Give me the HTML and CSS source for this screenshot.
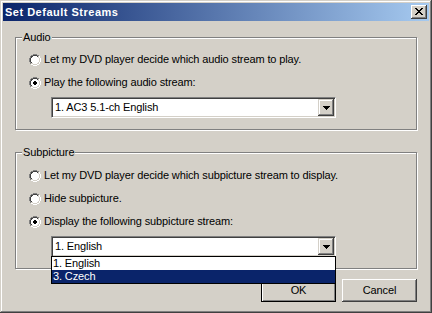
FILE: index.html
```html
<!DOCTYPE html>
<html>
<head>
<meta charset="utf-8">
<title>Set Default Streams</title>
<link rel="stylesheet" href="styles.css">
</head>
<body>
<div class="window">
  <div class="titlebar">
    <span class="title">Set Default Streams</span>
    <div class="close-btn">
      <svg width="8" height="7" viewBox="0 0 8 7" shape-rendering="crispEdges"><path fill="#000" d="M0 0h2v1h-2zM6 0h2v1h-2zM1 1h2v1h-2zM5 1h2v1h-2zM2 2h4v1h-4zM3 3h2v1h-2zM2 4h4v1h-4zM1 5h2v1h-2zM5 5h2v1h-2zM0 6h2v1h-2zM6 6h2v1h-2z"/></svg>
    </div>
  </div>
  <div class="client">
    <div class="group group-audio">
      <div class="group-title">Audio</div>
      <div class="radio-row">
        <svg class="radio" width="12" height="12" viewBox="0 0 12 12" shape-rendering="crispEdges"><path fill="#808080" d="M4 0h4v1h-4zM2 1h2v1h-2zM8 1h2v1h-2zM1 2h1v2h-1zM0 4h1v4h-1zM1 8h1v2h-1z"/><path fill="#fff" d="M10 2h1v2h-1zM11 4h1v4h-1zM10 8h1v2h-1zM2 10h2v1h-2zM8 10h2v1h-2zM4 11h4v1h-4zM4 2h4v1h-4zM3 3h6v1h-6zM2 4h8v4h-8zM3 8h6v1h-6zM4 9h4v1h-4z"/><path fill="#404040" d="M4 1h4v1h-4zM2 2h2v1h-2zM8 2h1v1h-1zM2 3h1v1h-1zM1 4h1v4h-1zM2 8h1v1h-1z"/><path fill="#d4d0c8" d="M9 2h1v2h-1zM10 4h1v4h-1zM9 8h1v1h-1zM2 9h2v1h-2zM8 9h2v1h-2zM4 10h4v1h-4z"/></svg>
        <span>Let my DVD player decide which audio stream to play.</span>
      </div>
      <div class="radio-row">
        <svg class="radio" width="12" height="12" viewBox="0 0 12 12" shape-rendering="crispEdges"><path fill="#808080" d="M4 0h4v1h-4zM2 1h2v1h-2zM8 1h2v1h-2zM1 2h1v2h-1zM0 4h1v4h-1zM1 8h1v2h-1z"/><path fill="#fff" d="M10 2h1v2h-1zM11 4h1v4h-1zM10 8h1v2h-1zM2 10h2v1h-2zM8 10h2v1h-2zM4 11h4v1h-4zM4 2h4v1h-4zM3 3h6v1h-6zM2 4h8v4h-8zM3 8h6v1h-6zM4 9h4v1h-4z"/><path fill="#404040" d="M4 1h4v1h-4zM2 2h2v1h-2zM8 2h1v1h-1zM2 3h1v1h-1zM1 4h1v4h-1zM2 8h1v1h-1z"/><path fill="#d4d0c8" d="M9 2h1v2h-1zM10 4h1v4h-1zM9 8h1v1h-1zM2 9h2v1h-2zM8 9h2v1h-2zM4 10h4v1h-4z"/><path fill="#000" d="M5 4h2v1h-2zM4 5h4v2h-4zM5 7h2v1h-2z"/></svg>
        <span>Play the following audio stream:</span>
      </div>
      <div class="combo">
        <div class="combo-text">1. AC3 5.1-ch English</div>
        <div class="combo-btn">
          <svg width="7" height="4" viewBox="0 0 7 4" shape-rendering="crispEdges"><path fill="#000" d="M0 0h7v1h-7zM1 1h5v1h-5zM2 2h3v1h-3zM3 3h1v1h-1z"/></svg>
        </div>
      </div>
    </div>

    <div class="group group-sub">
      <div class="group-title">Subpicture</div>
      <div class="radio-row">
        <svg class="radio" width="12" height="12" viewBox="0 0 12 12" shape-rendering="crispEdges"><path fill="#808080" d="M4 0h4v1h-4zM2 1h2v1h-2zM8 1h2v1h-2zM1 2h1v2h-1zM0 4h1v4h-1zM1 8h1v2h-1z"/><path fill="#fff" d="M10 2h1v2h-1zM11 4h1v4h-1zM10 8h1v2h-1zM2 10h2v1h-2zM8 10h2v1h-2zM4 11h4v1h-4zM4 2h4v1h-4zM3 3h6v1h-6zM2 4h8v4h-8zM3 8h6v1h-6zM4 9h4v1h-4z"/><path fill="#404040" d="M4 1h4v1h-4zM2 2h2v1h-2zM8 2h1v1h-1zM2 3h1v1h-1zM1 4h1v4h-1zM2 8h1v1h-1z"/><path fill="#d4d0c8" d="M9 2h1v2h-1zM10 4h1v4h-1zM9 8h1v1h-1zM2 9h2v1h-2zM8 9h2v1h-2zM4 10h4v1h-4z"/></svg>
        <span>Let my DVD player decide which subpicture stream to display.</span>
      </div>
      <div class="radio-row">
        <svg class="radio" width="12" height="12" viewBox="0 0 12 12" shape-rendering="crispEdges"><path fill="#808080" d="M4 0h4v1h-4zM2 1h2v1h-2zM8 1h2v1h-2zM1 2h1v2h-1zM0 4h1v4h-1zM1 8h1v2h-1z"/><path fill="#fff" d="M10 2h1v2h-1zM11 4h1v4h-1zM10 8h1v2h-1zM2 10h2v1h-2zM8 10h2v1h-2zM4 11h4v1h-4zM4 2h4v1h-4zM3 3h6v1h-6zM2 4h8v4h-8zM3 8h6v1h-6zM4 9h4v1h-4z"/><path fill="#404040" d="M4 1h4v1h-4zM2 2h2v1h-2zM8 2h1v1h-1zM2 3h1v1h-1zM1 4h1v4h-1zM2 8h1v1h-1z"/><path fill="#d4d0c8" d="M9 2h1v2h-1zM10 4h1v4h-1zM9 8h1v1h-1zM2 9h2v1h-2zM8 9h2v1h-2zM4 10h4v1h-4z"/></svg>
        <span>Hide subpicture.</span>
      </div>
      <div class="radio-row">
        <svg class="radio" width="12" height="12" viewBox="0 0 12 12" shape-rendering="crispEdges"><path fill="#808080" d="M4 0h4v1h-4zM2 1h2v1h-2zM8 1h2v1h-2zM1 2h1v2h-1zM0 4h1v4h-1zM1 8h1v2h-1z"/><path fill="#fff" d="M10 2h1v2h-1zM11 4h1v4h-1zM10 8h1v2h-1zM2 10h2v1h-2zM8 10h2v1h-2zM4 11h4v1h-4zM4 2h4v1h-4zM3 3h6v1h-6zM2 4h8v4h-8zM3 8h6v1h-6zM4 9h4v1h-4z"/><path fill="#404040" d="M4 1h4v1h-4zM2 2h2v1h-2zM8 2h1v1h-1zM2 3h1v1h-1zM1 4h1v4h-1zM2 8h1v1h-1z"/><path fill="#d4d0c8" d="M9 2h1v2h-1zM10 4h1v4h-1zM9 8h1v1h-1zM2 9h2v1h-2zM8 9h2v1h-2zM4 10h4v1h-4z"/><path fill="#000" d="M5 4h2v1h-2zM4 5h4v2h-4zM5 7h2v1h-2z"/></svg>
        <span>Display the following subpicture stream:</span>
      </div>
      <div class="combo-wrap">
        <div class="combo">
          <div class="combo-text">1. English</div>
          <div class="combo-btn">
            <svg width="7" height="4" viewBox="0 0 7 4" shape-rendering="crispEdges"><path fill="#000" d="M0 0h7v1h-7zM1 1h5v1h-5zM2 2h3v1h-3zM3 3h1v1h-1z"/></svg>
          </div>
        </div>
        <ul class="droplist">
          <li class="item">1. English</li>
          <li class="item selected">3. Czech</li>
        </ul>
      </div>
    </div>

    <div class="buttons">
      <div class="btn btn-default">OK</div>
      <div class="btn">Cancel</div>
    </div>
  </div>
</div>
</body>
</html>
```
FILE: styles.css
```css
html, body {
  margin: 0;
  padding: 0;
  background: #d4d0c8;
}

body {
  font-family: "Liberation Sans", Arial, sans-serif;
  font-size: 11px;
  line-height: 13px;
  letter-spacing: -0.12px;
  color: #000;
}

.window {
  box-sizing: border-box;
  width: 432px;
  height: 313px;
  padding: 3px;
  background: #d4d0c8;
  box-shadow:
    inset -1px -1px 0 #404040,
    inset 1px 1px 0 #d4d0c8,
    inset -2px -2px 0 #808080,
    inset 2px 2px 0 #ffffff;
  display: flex;
  flex-direction: column;
}

.titlebar {
  height: 18px;
  flex: none;
  background: linear-gradient(to right, #0a246a, #a6caf0);
  display: flex;
  align-items: center;
  justify-content: space-between;
  padding: 0 2px 0 2px;
}

.title {
  color: #fff;
  font-weight: bold;
  font-size: 11px;
  letter-spacing: 0.5px;
}

.close-btn {
  box-sizing: border-box;
  width: 16px;
  height: 14px;
  background: #d4d0c8;
  box-shadow:
    inset -1px -1px 0 #404040,
    inset 1px 1px 0 #ffffff,
    inset -2px -2px 0 #808080;
  display: flex;
  align-items: flex-start;
  justify-content: flex-start;
  padding: 3px 0 0 4px;
}

.close-btn svg {
  display: block;
}

.client {
  flex: 1;
  padding: 10px 12px 0 12px;
  display: flex;
  flex-direction: column;
}

.group {
  border: 1px solid #808080;
  box-shadow: 1px 1px 0 #ffffff, inset 1px 1px 0 #ffffff;
  margin-top: 6px;
  padding: 0 12px 11px 13px;
  display: flex;
  flex-direction: column;
  align-items: flex-start;
}

.group-sub {
  margin-top: 22px;
}

.group-title {
  margin: -7px 0 9px -7px;
  padding: 0 1px;
  background: #d4d0c8;
  height: 13px;
}

.group-sub .group-title {
  margin-bottom: 10px;
}

.radio-row {
  display: flex;
  align-items: center;
  height: 13px;
  margin-bottom: 10px;
  white-space: nowrap;
}

.radio {
  display: block;
  flex: none;
  margin-right: 3px;
}

.combo-wrap {
  position: relative;
  margin-left: 22px;
  margin-top: -2px;
}

.group-audio .combo {
  margin-left: 22px;
  margin-top: -2px;
}

.combo {
  box-sizing: border-box;
  width: 285px;
  height: 21px;
  border: 1px solid;
  border-color: #808080 #ffffff #ffffff #808080;
  box-shadow: inset 1px 1px 0 #404040, inset -1px -1px 0 #d4d0c8;
  padding: 1px;
  display: flex;
  background: #ffffff;
}

.combo-text {
  flex: 1;
  padding-left: 2px;
  line-height: 17px;
  background: #ffffff;
}

.combo-btn {
  box-sizing: border-box;
  width: 16px;
  height: 17px;
  background: #d4d0c8;
  box-shadow:
    inset -1px -1px 0 #404040,
    inset 1px 1px 0 #d4d0c8,
    inset -2px -2px 0 #808080,
    inset 2px 2px 0 #ffffff;
  display: flex;
  align-items: center;
  justify-content: center;
}

.combo-btn svg {
  display: block;
}

.droplist {
  position: absolute;
  left: 0;
  top: 20px;
  box-sizing: border-box;
  width: 285px;
  margin: 0;
  padding: 0;
  list-style: none;
  background: #ffffff;
  border: 1px solid #000;
  z-index: 2;
}

.item {
  height: 13px;
  line-height: 13px;
  padding-left: 1px;
}

.item.selected {
  background: #0a246a;
  color: #ffffff;
}

.buttons {
  margin-top: 10px;
  display: flex;
  justify-content: flex-end;
  gap: 6px;
}

.btn {
  box-sizing: border-box;
  width: 75px;
  height: 23px;
  background: #d4d0c8;
  box-shadow:
    inset -1px -1px 0 #404040,
    inset 1px 1px 0 #ffffff,
    inset -2px -2px 0 #808080;
  display: flex;
  align-items: center;
  justify-content: center;
}

.btn-default {
  border: 1px solid #000;
  box-shadow:
    inset 1px 1px 0 #ffffff,
    inset -1px -1px 0 #808080;
}
```
